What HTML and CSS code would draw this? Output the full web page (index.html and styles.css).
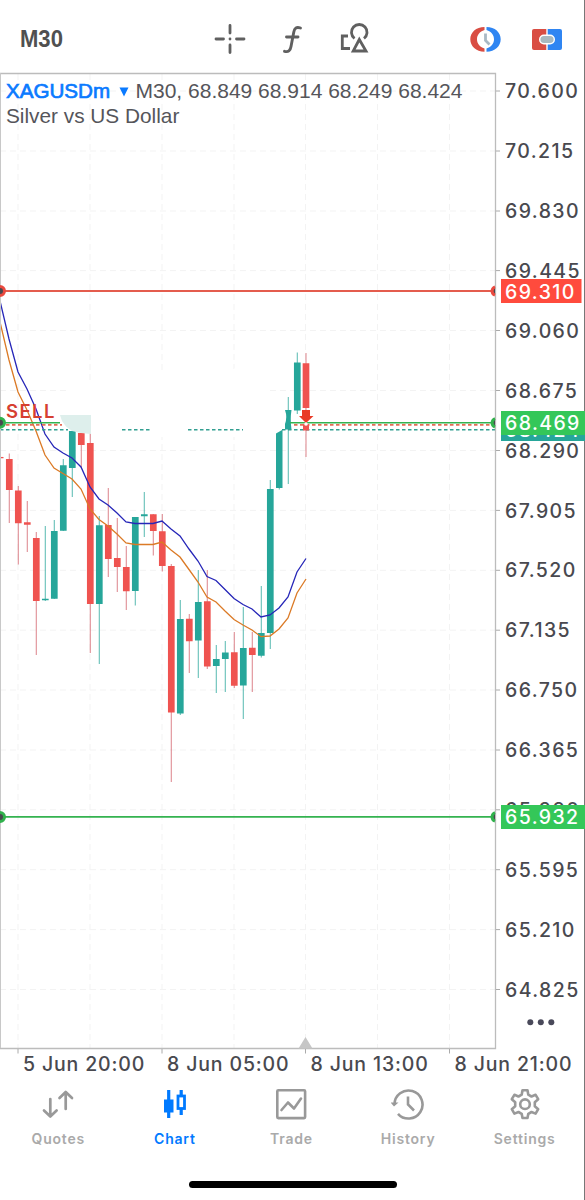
FILE: index.html
```html
<!DOCTYPE html>
<html lang="en">
<head>
    <meta charset="UTF-8">
    <title>XAGUSDm M30</title>
    <link rel="stylesheet" href="styles.css">
</head>
<body>
<header class="toolbar">
    <span class="period">M30</span>
    <div class="tools">
        <svg width="34" height="34" viewBox="213 22 34 34" fill="none" stroke="#606060" stroke-width="2.800" stroke-linecap="round">
            <path d="M230 25.500V33M230 45V52.500M216 39H223.500M236.500 39H244"/>
            <circle cx="230" cy="39" r="1.400" fill="#606060" stroke="none"/>
        </svg>
        <svg width="34" height="34" viewBox="275 22 34 34" fill="none" stroke="#606060" stroke-width="2.900" stroke-linecap="round" stroke-linejoin="round">
            <path d="M300.500 28C296.500 26.500 294.500 28 293.800 32L291 46.500C290.300 50.800 288.300 52.300 284.500 51.300M286.500 37H298"/>
        </svg>
        <svg width="34" height="34" viewBox="337 22 34 34" fill="none" stroke="#606060" stroke-width="2.800">
            <path d="M348 36H342.300V48.500H350"/>
            <path d="M354.500 38.500A7.800 7.800 0 1 1 364 38.500"/>
            <path d="M359.300 39.500L353.200 51H366Z"/>
        </svg>
    </div>
    <div class="tools">
        <svg width="34" height="34" viewBox="468 22 34 34">
            <path d="M484.500 27C476 27 470.300 32.500 470.300 39.300S476 51.700 484.500 51.700V48.500C479.500 47 477 43.500 477 39.300S479.500 31.500 484.500 30Z" fill="#d94d43"/>
            <path d="M486.500 27C495 27 500.700 32.500 500.700 39.300S495 51.700 486.500 51.700V48.500C491.500 47 494 43.500 494 39.300S491.500 31.500 486.500 30Z" fill="#2f85f2"/>
            <path d="M485.500 33.500V40.500L489.500 44.500" fill="none" stroke="#a9b9c5" stroke-width="2.800"/>
        </svg>
        <svg width="34" height="34" viewBox="530 22 34 34">
            <path d="M534 29H546.300V50H534Q532 50 532 48V31Q532 29 534 29Z" fill="#d94d43"/>
            <path d="M547.700 29H560Q562 29 562 31V48Q562 50 560 50H547.700Z" fill="#2f85f2"/>
            <rect x="539.700" y="35.300" width="14.600" height="8.400" rx="4.200" fill="#a9b9c0" stroke="#fff" stroke-width="1.400"/>
        </svg>
    </div>
</header>

<main class="chart">
    <svg width="585" height="1006" viewBox="0 72 585 1006">
        <!-- grid -->
        <path class="grid" d="M18 74V1048M90 74V1048M162 74V1048M234 74V1048M305.500 74V1048M377.500 74V1048M449.500 74V1048"/>
        <path class="grid" d="M0 91H496M0 151H496M0 211H496M0 270.600H496M0 330.500H496M0 390.500H496M0 450.500H496M0 510.400H496M0 570.300H496M0 630.200H496M0 690H496M0 750H496M0 809.800H496M0 869.700H496M0 929.600H496M0 989.500H496"/>
        <path d="M92 380Q92 374 110 374H222L245 364H270V414L240 437H96L66 418V388Z" fill="#fff"/>

        <!-- candles: wicks, then bodies -->
        <path class="wick up" d="M45.300 526V601M54.300 520V599M63.300 459V531M72.300 431V497M99.300 516V664M135.300 517V605.500M144.300 492V537M180.300 600V715M198.300 570V678M216.300 645V693M225.300 641V692M243.300 607V719M261.300 586V657.500M270.300 480V649M279.300 433V489.500M288.300 397V484M297.300 352.500V414"/>
        <path class="wick down" d="M9.300 453.500V523M18.300 486V564.500M27.300 501V552M36.300 532V655M81.300 433V468M90.300 433V653M108.300 488V577M117.300 518V592M126.300 546V610M153.300 514V555.500M162.300 514V571.500M171.300 564V782M189.300 614V673M207.300 570V669M234.300 632V688M252.300 632V692M306 353V457"/>
        <path class="body up" d="M45.300 598.800V600.200M54.300 531V598.700M63.300 465.300V530.700M72.300 431V468M99.300 525.300V604M135.300 517V591M144.300 514.300V516.300M180.300 619V713.500M198.300 602V640.500M216.300 659V666M225.300 652.500V659M243.300 648V685.500M261.300 633V655.700M270.300 489V633M297.300 362.500V410.500"/>
        <path class="body down" d="M9.300 459V490M18.300 490.500V523.200M27.300 522.300V524.800M36.300 538V601M81.300 433V445M90.300 443V604M108.300 525V559M117.300 558V567M126.300 567V591.300M153.300 514.300V531M162.300 531.300V566M171.300 566V712.500M189.300 618.700V641.200M207.300 601.300V666.500M234.300 652.300V685.700M252.300 647.700V655M306 363.300V408"/>
        <path d="M276 433.500L282.500 429.700V488H276ZM285 410H291.500Q290 419 291.500 429.500H285V424Q287.500 417 285 410Z" fill="#26a69a"/>
        <path d="M0 457.600H3.500" stroke="#ef5350" stroke-width="1.300"/>
        <path d="M60 415H91V434L81 433L72 431L66 426.500L62 421Z" fill="#deefec"/>

        <!-- moving averages -->
        <polyline class="ma slow" points="0,301 9,339 18,372 27,389 36,409 45,434 54,447 63,453 72,458 81,467 90,487 99,499 108,505 117,513 126,522 135,523.500 153,523.500 162,521 171,529 180,536 189,549 198,561 207,576.500 216,580.500 225,589.500 234,598.500 243,604.500 252,609 261,617 270,615 279,608 288,597 297,572 306,558.500"/>
        <polyline class="ma fast" points="0,322 9,360 18,392 27,410 36,431 45,455 54,468 63,473.500 72,479 81,489 90,509 99,519.500 108,526 117,534 126,543 135,544.500 153,544.500 162,542 171,550 180,557 189,569.500 198,582 207,597 216,602 225,611 234,619.500 243,625 252,630 261,636.700 270,636 279,629 288,618 297,593 306,579"/>

        <!-- order levels -->
        <path class="dots teal" d="M0 429.700H68M122 429.700H151M188 429.700H243M282 429.700H495"/>
        <path class="dots red" d="M6 424.900H62M294 424.900H495"/>
        <path d="M0 291H495" stroke="#e45c4d" stroke-width="1.800"/>
        <path d="M0 422.700H60M290 422.700H495M0 816.900H495" stroke="#34b350" stroke-width="1.600"/>
        <path d="M303 424.500L306 422L309 425V430.500H303Z" fill="#ef5350"/>
        <path d="M302 410H310V416H313.500L306 423L299 416H302Z" fill="#e93a26"/>
        <circle cx="306" cy="424" r="1.800" fill="#fff"/>
        <text class="sell" x="6" y="418">SELL</text>

        <!-- frame -->
        <path d="M0 73.500H495.500V1048.500H0" fill="none" stroke="#bcbcbc" stroke-width="1.300"/>
        <path d="M.500 73V1048" stroke="#c8c8c8"/>
        <path d="M496 91H500M496 151H500M496 211H500M496 270.600H500M496 330.500H500M496 390.500H500M496 450.500H500M496 510.400H500M496 570.300H500M496 630.200H500M496 690H500M496 750H500M496 809.800H500M496 869.700H500M496 929.600H500M496 989.500H500M18 1049V1053.500M162 1049V1053.500M305.500 1049V1053.500M449.500 1049V1053.500" stroke="#aaa"/>
        <path d="M305.500 1037L312.500 1048.500H298.500Z" fill="#c6c6c6"/>
        <g fill="#49494f" stroke="#e94a3f" stroke-width="3">
            <path d="M0 286.500A4.500 4.500 0 0 1 0 295.500M495 286.800A4.500 4.500 0 0 0 495 295.200"/>
        </g>
        <g fill="#49494f" stroke="#31b14c" stroke-width="3">
            <path d="M0 418.300A4.500 4.500 0 0 1 0 427.300M495 418.600A4.500 4.500 0 0 0 495 427M0 812.400A4.500 4.500 0 0 1 0 821.400M495 812.700A4.500 4.500 0 0 0 495 821.100"/>
        </g>

        <!-- price scale -->
        <g class="scale">
            <text x="505" y="98.200">70.600</text>
            <text x="505" y="158.100">70.215</text>
            <text x="505" y="218">69.830</text>
            <text x="505" y="277.900">69.445</text>
            <text x="505" y="337.800">69.060</text>
            <text x="505" y="397.700">68.675</text>
            <text x="505" y="457.600">68.290</text>
            <text x="505" y="517.500">67.905</text>
            <text x="505" y="577.400">67.520</text>
            <text x="505" y="637.300">67.135</text>
            <text x="505" y="697.200">66.750</text>
            <text x="505" y="757.100">66.365</text>
            <text x="505" y="817">65.980</text>
            <text x="505" y="876.900">65.595</text>
            <text x="505" y="936.800">65.210</text>
            <text x="505" y="996.700">64.825</text>
        </g>
        <rect x="501" y="279" width="80.500" height="24" fill="#ff4b3d"/>
        <rect x="501" y="418" width="84" height="23" fill="#26a69a"/>
        <g class="scale light">
            <text x="505" y="298.500">69.310</text>
            <text x="505" y="436.500">68.424</text>
        </g>
        <rect x="501" y="411" width="84" height="24" fill="#34c759"/>
        <rect x="501" y="805" width="84" height="24" fill="#34c759"/>
        <g class="scale light">
            <text x="505" y="430.300">68.469</text>
            <text x="505" y="824.200">65.932</text>
        </g>
        <g fill="#49495a">
            <circle cx="530.300" cy="1022.300" r="3"/>
            <circle cx="540.800" cy="1022.300" r="3"/>
            <circle cx="551.300" cy="1022.300" r="3"/>
        </g>

        <!-- time scale -->
        <g class="scale time">
            <text x="23" y="1070.500">5 Jun 20:00</text>
            <text x="167" y="1070.500">8 Jun 05:00</text>
            <text x="310.500" y="1070.500">8 Jun 13:00</text>
            <text x="454.500" y="1070.500">8 Jun 21:00</text>
        </g>

        <!-- symbol info -->
        <text class="symbol" x="6" y="97.700">XAGUSDm</text>
        <path d="M119.500 87.500H128.500L124 96.500Z" fill="#0a7aff"/>
        <text class="info" x="135.500" y="97.700">M30, 68.849 68.914 68.249 68.424</text>
        <text class="info desc" x="6" y="123.300">Silver vs US Dollar</text>
    </svg>
</main>

<nav class="tabs">
    <a class="tab">
        <svg width="34" height="34" viewBox="41 1087 34 34" fill="none" stroke="currentColor" stroke-width="2.700" stroke-linecap="round" stroke-linejoin="round">
            <path d="M50.300 1099V1116M44 1110.500L50.300 1116.500L56.600 1110.500M65.700 1109V1092M59.500 1098L65.700 1092L72 1098"/>
        </svg>
        <span>Quotes</span>
    </a>
    <a class="tab active">
        <svg width="34" height="34" viewBox="158 1087 34 34" fill="none" stroke="currentColor">
            <path d="M168.700 1090V1118M181.200 1090V1096M181.200 1109V1115" stroke-width="3.200"/>
            <rect x="164" y="1099.500" width="9.500" height="13" fill="currentColor" stroke="none"/>
            <rect x="178" y="1096" width="6.500" height="12.500" stroke-width="2.800"/>
        </svg>
        <span>Chart</span>
    </a>
    <a class="tab">
        <svg width="34" height="34" viewBox="275 1087 34 34" fill="none" stroke="currentColor" stroke-width="2.600" stroke-linecap="round" stroke-linejoin="round">
            <rect x="278.300" y="1090.300" width="27.800" height="27.800" rx="1"/>
            <path d="M282.500 1110L289 1102.500L295 1108.500L302 1098.500"/>
        </svg>
        <span>Trade</span>
    </a>
    <a class="tab">
        <svg width="34" height="34" viewBox="392 1087 34 34" fill="none" stroke="currentColor" stroke-width="2.600">
            <path d="M395.500 1104.500A14 14 0 1 1 399 1113.800" />
            <path d="M391.500 1102.500H399.500L395 1106.500Z" fill="currentColor" stroke="none"/>
            <path d="M409 1096.500V1104.500L415 1110.500"/>
        </svg>
        <span>History</span>
    </a>
    <a class="tab">
        <svg width="34" height="34" viewBox="509 1087 34 34" fill="none" stroke="currentColor" stroke-width="2.600" stroke-linejoin="round">
            <path d="M523.500 1090.300H528.500L529.300 1094.700L532.500 1096.500L536.600 1094.800L539.200 1099.200L535.800 1102.200V1106.200L539.200 1109.200L536.600 1113.600L532.500 1112L529.300 1113.800L528.500 1118H523.500L522.700 1113.800L519.500 1112L515.400 1113.600L512.800 1109.200L516.200 1106.200V1102.200L512.800 1099.200L515.400 1094.800L519.500 1096.500L522.700 1094.700Z"/>
            <circle cx="526" cy="1104.200" r="4.800"/>
        </svg>
        <span>Settings</span>
    </a>
</nav>
<div class="home-bar"></div>
</body>
</html>
```
FILE: styles.css
```css
body{
    margin: 0;
    width: 585px;
    height: 1200px;
    overflow: hidden;
    background: #fff;
    box-shadow: inset -1px 0 0 #777;
    font-family: Inter, "Liberation Sans", sans-serif;
}
.toolbar{
    display: flex;
    align-items: center;
    justify-content: space-between;
    box-sizing: border-box;
    height: 72px;
    padding: 6px 21px 0 20px;
}
.period{
    width: 96px;
    color: #505050;
    font: bold 24.500px "Liberation Sans", sans-serif;
    transform: scaleX(.9);
    transform-origin: left;
}
.tools{
    display: flex;
    gap: 28px;
}
.chart svg{
    display: block;
}
.grid{
    stroke: #f3f3f3;
    stroke-dasharray: 6 4;
}
.wick{
    stroke-width: 1.100;
    opacity: .7;
}
.body{
    stroke-width: 6.700;
}
.up{
    stroke: #26a69a;
}
.down{
    stroke: #ef5350;
}
.wick.down{
    stroke: #d4606a;
}
.ma{
    fill: none;
    stroke-width: 1.300;
}
.slow{
    stroke: #2626b8;
}
.fast{
    stroke: #db7a26;
}
.dots{
    stroke-width: 1.600;
    stroke-dasharray: 3.500 2.500;
}
.teal{
    stroke: #329f91;
}
.red{
    stroke: #e56b55;
}
.sell{
    font-size: 18.500px;
    font-weight: 600;
    letter-spacing: 1.400px;
    fill: #d63f31;
}
.scale{
    font-size: 19.500px;
    font-weight: 500;
    letter-spacing: 1.400px;
    fill: #49494f;
}
.time{
    letter-spacing: .850px;
}
.light{
    fill: #fff;
}
.symbol,.info{
    font-family: "Liberation Sans", sans-serif;
    font-size: 21px;
    fill: #55555a;
}
.symbol{
    font-size: 20.600px;
    fill: #0a7aff;
    stroke: #0a7aff;
    stroke-width: .700;
}
.desc{
    font-size: 20.800px;
}
.tabs{
    display: flex;
    width: 583px;
    height: 90px;
    padding-top: 9px;
}
.tab{
    display: flex;
    flex-direction: column;
    align-items: center;
    flex: 1;
    color: #999;
    font-size: 14px;
    font-weight: 600;
    letter-spacing: .8px;
}
.tab span{
    margin-top: 9px;
    color: #aaa;
}
.tab.active,.tab.active span{
    color: #007aff;
}
.home-bar{
    width: 208px;
    height: 7px;
    margin: 4px auto 0;
    border-radius: 4px;
    background: #000;
}
```
